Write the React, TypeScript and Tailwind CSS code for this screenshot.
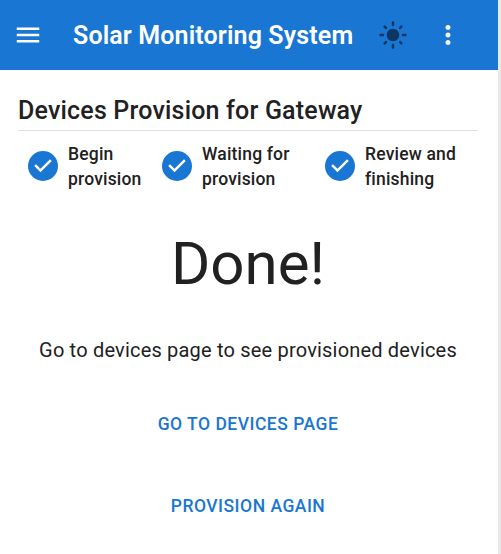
import React from "react";

const steps = [
  { lines: ["Begin", "provision"], cls: "ml-[25px] w-[134px]" },
  { lines: ["Waiting for", "provision"], cls: "w-[163px]" },
  { lines: ["Review and", "finishing"], cls: "" },
];

function CheckCircle() {
  return (
    <svg viewBox="0 0 24 24" className="size-9 shrink-0 fill-[#1976d2]">
      <path d="M12 0a12 12 0 1 0 0 24 12 12 0 0 0 0-24zm-2 17l-5-5 1.4-1.4 3.6 3.6 7.6-7.6L19 8l-9 9z" transform="translate(2 2) scale(.8333)" />
    </svg>
  );
}

export default function App() {
  return (
    <div className="flex h-[554px] w-[501px] bg-[#e8e8e8] font-['Roboto',sans-serif] text-[#212121]">
      <div className="flex w-[498px] flex-col bg-white">
        <header className="flex h-[70px] shrink-0 items-center bg-[#1976d2] text-white">
          <svg viewBox="0 0 24 24" className="ml-[13px] size-[30px] fill-white">
            <path d="M3 18h18v-2H3v2zm0-5h18v-2H3v2zm0-7v2h18V6H3z" />
          </svg>
          <h1 className="ml-[30px] w-[305px] whitespace-nowrap pt-[2px] text-[25px] font-semibold leading-8 tracking-[0.13px]">Solar Monitoring System</h1>
          <svg viewBox="0 0 24 24" className="size-[30px] fill-[#0d3762]">
            <path d="M12 7c-2.76 0-5 2.24-5 5s2.24 5 5 5 5-2.24 5-5-2.24-5-5-5zM2 13h2c.55 0 1-.45 1-1s-.45-1-1-1H2c-.55 0-1 .45-1 1s.45 1 1 1zm18 0h2c.55 0 1-.45 1-1s-.45-1-1-1h-2c-.55 0-1 .45-1 1s.45 1 1 1zM11 2v2c0 .55.45 1 1 1s1-.45 1-1V2c0-.55-.45-1-1-1s-1 .45-1 1zm0 18v2c0 .55.45 1 1 1s1-.45 1-1v-2c0-.55-.45-1-1-1s-1 .45-1 1zM5.99 4.58a.996.996 0 1 0-1.41 1.41l1.06 1.06a.996.996 0 1 0 1.41-1.41L5.99 4.58zm12.37 12.37a.996.996 0 1 0-1.41 1.41l1.06 1.06a.996.996 0 1 0 1.41-1.41l-1.06-1.06zm1.06-10.96a.996.996 0 1 0-1.41-1.41l-1.06 1.06a.996.996 0 1 0 1.41 1.41l1.06-1.06zM7.05 18.36a.996.996 0 1 0-1.41-1.41l-1.06 1.06a.996.996 0 1 0 1.41 1.41l1.06-1.06z" />
          </svg>
          <svg viewBox="0 0 24 24" className="ml-[25px] size-[30px] fill-white">
            <path d="M12 8c1.1 0 2-.9 2-2s-.9-2-2-2-2 .9-2 2 .9 2 2 2zm0 2c-1.1 0-2 .9-2 2s.9 2 2 2 2-.9 2-2-.9-2-2-2zm0 6c-1.1 0-2 .9-2 2s.9 2 2 2 2-.9 2-2-.9-2-2-2z" />
          </svg>
        </header>
        <main className="flex w-[496px] flex-col">
          <h2 className="mx-[18px] mt-[21px] h-[40px] whitespace-nowrap border-b border-[#e0e0e0] text-[25px] font-medium leading-[40px] tracking-[0.19px]">Devices Provision for Gateway</h2>
          <div className="mt-[10px] flex h-[50px] items-center">
            {steps.map((s) => (
              <div key={s.lines[0]} className={`flex items-center ${s.cls}`}>
                <CheckCircle />
                <div className="ml-[7px] whitespace-nowrap pt-[2px] text-[17.5px] font-medium leading-[25px] tracking-[0.18px]">
                  {s.lines.map((l) => <div key={l}>{l}</div>)}
                </div>
              </div>
            ))}
          </div>
          <div className="mt-[38px] h-[70px] text-center text-[60px] leading-[70px]">Done!</div>
          <p className="mt-[36px] text-center text-[20px] leading-[30px] tracking-[0.19px]">Go to devices page to see provisioned devices</p>
          <button className="mt-[44px] h-[30px] text-[17.5px] font-medium leading-[30px] tracking-[0.5px] text-[#1976d2]">GO TO DEVICES PAGE</button>
          <button className="mt-[52px] h-[30px] text-[17.5px] font-medium leading-[30px] tracking-[0.5px] text-[#1976d2]">PROVISION AGAIN</button>
        </main>
      </div>
    </div>
  );
}
